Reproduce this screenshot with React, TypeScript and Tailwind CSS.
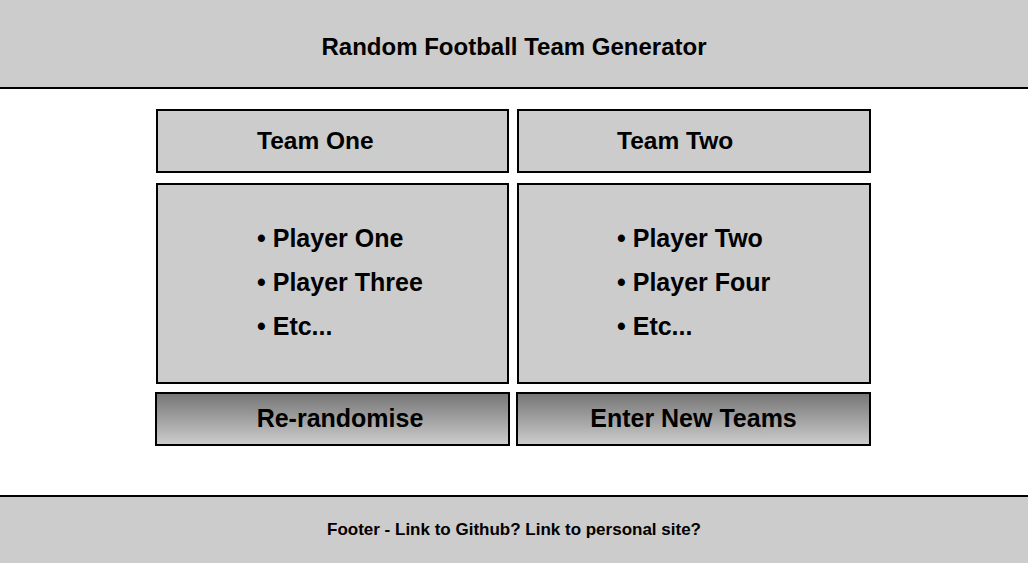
const teams = [
  { name: 'Team One', players: ['Player One', 'Player Three', 'Etc...'] },
  { name: 'Team Two', players: ['Player Two', 'Player Four', 'Etc...'] },
];

export default function App() {
  return (
    <div className="flex h-[563px] flex-col bg-white text-black font-['Liberation_Sans',Arial,sans-serif]">
      <header className="flex h-[89px] shrink-0 items-center justify-center border-b-2 border-black bg-[#cccccc]">
        <h1 className="pt-[6px] text-[24px] font-bold">Random Football Team Generator</h1>
      </header>

      <main className="flex-1">
        <div className="ml-[156px] mt-[20px] grid w-[715px] grid-cols-[353px_354px] gap-x-[8px]">
          {teams.map((team, t) => (
            <div
              key={team.name}
              className={`flex h-[64px] items-center border-2 border-black bg-[#cccccc] ${t === 0 ? 'pl-[99px]' : 'pl-[98px]'}`}
            >
              <h2 className="text-[24.5px] font-bold">{team.name}</h2>
            </div>
          ))}
          {teams.map((team, t) => (
            <div
              key={team.name + '-list'}
              className={`mt-[10px] h-[201px] border-2 border-black bg-[#cccccc] pt-[39px] ${t === 0 ? 'pl-[99px]' : 'pl-[98px]'}`}
            >
              <ul className="flex flex-col gap-[16px] text-[25px] font-bold leading-[28px]">
                {team.players.map((p, i) => (
                  <li key={i}>• {p}</li>
                ))}
              </ul>
            </div>
          ))}
        </div>
        <div className="ml-[155px] mt-[8px] flex w-[716px] gap-[6px]">
          <button className="h-[54px] w-[355px] border-2 border-black bg-gradient-to-b from-[#777777] to-[#cccccc] pl-[15px] text-[25px] font-bold">
            Re-randomise
          </button>
          <button className="h-[54px] w-[355px] border-2 border-black bg-gradient-to-b from-[#777777] to-[#cccccc] text-[25px] font-bold">
            Enter New Teams
          </button>
        </div>
      </main>

      <footer className="flex h-[68px] shrink-0 items-center justify-center border-t-2 border-black bg-[#cccccc]">
        <p className="text-[17px] font-bold">Footer - Link to Github? Link to personal site?</p>
      </footer>
    </div>
  );
}
